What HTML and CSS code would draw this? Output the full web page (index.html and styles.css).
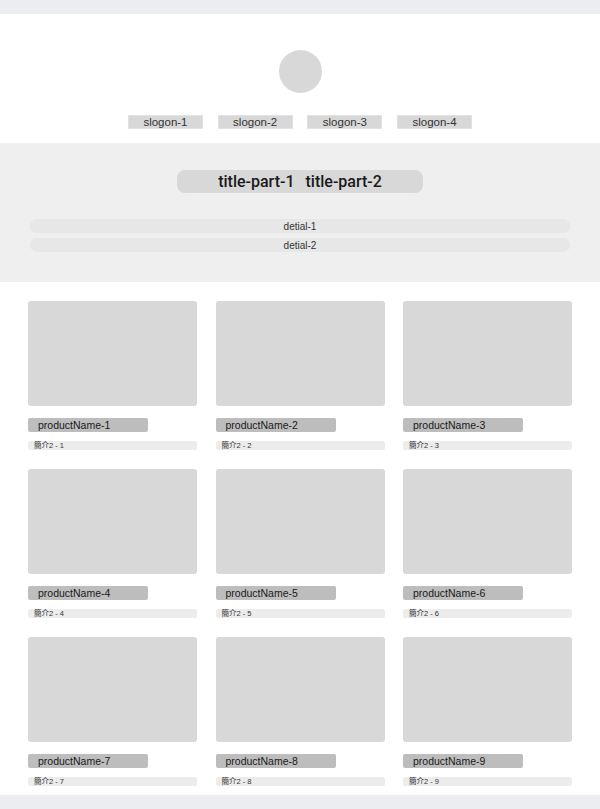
FILE: index.html
```html
<!DOCTYPE html>
<html lang="zh">
<head>
<meta charset="utf-8">
<title>Product page</title>
<link rel="stylesheet" href="styles.css">
</head>
<body>
<div class="bar"></div>
<header class="header">
  <div class="logo"></div>
  <div class="slogans">
    <span class="slogan">slogon-1</span>
    <span class="slogan">slogon-2</span>
    <span class="slogan">slogon-3</span>
    <span class="slogan">slogon-4</span>
  </div>
</header>
<section class="intro">
  <h1 class="title"><span>title-part-1</span><span>title-part-2</span></h1>
  <div class="details">
    <p class="detail">detial-1</p>
    <p class="detail">detial-2</p>
  </div>
</section>
<main class="products">
  <div class="card"><div class="pic"></div><div class="name">productName-1</div><div class="desc">簡介2 - 1</div></div>
  <div class="card"><div class="pic"></div><div class="name">productName-2</div><div class="desc">簡介2 - 2</div></div>
  <div class="card"><div class="pic"></div><div class="name">productName-3</div><div class="desc">簡介2 - 3</div></div>
  <div class="card"><div class="pic"></div><div class="name">productName-4</div><div class="desc">簡介2 - 4</div></div>
  <div class="card"><div class="pic"></div><div class="name">productName-5</div><div class="desc">簡介2 - 5</div></div>
  <div class="card"><div class="pic"></div><div class="name">productName-6</div><div class="desc">簡介2 - 6</div></div>
  <div class="card"><div class="pic"></div><div class="name">productName-7</div><div class="desc">簡介2 - 7</div></div>
  <div class="card"><div class="pic"></div><div class="name">productName-8</div><div class="desc">簡介2 - 8</div></div>
  <div class="card"><div class="pic"></div><div class="name">productName-9</div><div class="desc">簡介2 - 9</div></div>
</main>
<div class="bar"></div>
</body>
</html>
```

FILE: styles.css
```css
* { box-sizing: border-box; }
html, body { margin: 0; padding: 0; }
body {
  width: 600px;
  background: #ffffff;
  font-family: "Liberation Sans", "Noto Sans CJK SC", sans-serif;
  color: #222;
}
.bar {
  height: 14px;
  background: #ecedf1;
}
.header {
  height: 129px;
  display: flex;
  flex-direction: column;
  align-items: center;
  padding-top: 36px;
}
.logo {
  width: 43px;
  height: 43px;
  border-radius: 50%;
  background: #d8d8d8;
}
.slogans {
  margin-top: 22px;
  display: flex;
  gap: 14.7px;
}
.slogan {
  width: 75px;
  height: 14px;
  background: #d8d8d8;
  border: 1px solid #e2e2e2;
  font-size: 11.5px;
  line-height: 13px;
  text-align: center;
  color: #333;
}
.intro {
  height: 139px;
  background: #efefef;
  padding: 27px 30px 0;
  display: flex;
  flex-direction: column;
  align-items: center;
}
.title {
  margin: 0;
  width: 246px;
  height: 23px;
  border-radius: 8px;
  background: #d8d8d8;
  font-family: Roboto, "Liberation Sans", sans-serif;
  font-weight: 500;
  font-size: 16px;
  line-height: 23px;
  color: #1a1a1a;
  display: flex;
  justify-content: center;
  gap: 11px;
}
.details {
  margin-top: 26px;
  width: 540px;
  display: flex;
  flex-direction: column;
  gap: 5px;
}
.detail {
  margin: 0;
  height: 14px;
  border-radius: 7px;
  background: #e7e7e7;
  font-size: 10px;
  line-height: 15px;
  text-align: center;
  color: #333;
}
.products {
  display: grid;
  grid-template-columns: repeat(3, 169px);
  column-gap: 18.5px;
  row-gap: 19px;
  padding: 19px 28px 9px;
}
.card {
  display: flex;
  flex-direction: column;
}
.pic {
  height: 105px;
  border-radius: 3px;
  background: #d8d8d8;
}
.name {
  margin-top: 12px;
  width: 120px;
  height: 14px;
  border-radius: 2px;
  background: #bdbdbd;
  padding-left: 10px;
  font-size: 10.5px;
  line-height: 14px;
  color: #1a1a1a;
}
.desc {
  margin-top: 9px;
  height: 9px;
  border-radius: 2px;
  background: #ececec;
  padding-left: 6px;
  font-size: 7.5px;
  line-height: 9px;
  color: #333;
}
```
